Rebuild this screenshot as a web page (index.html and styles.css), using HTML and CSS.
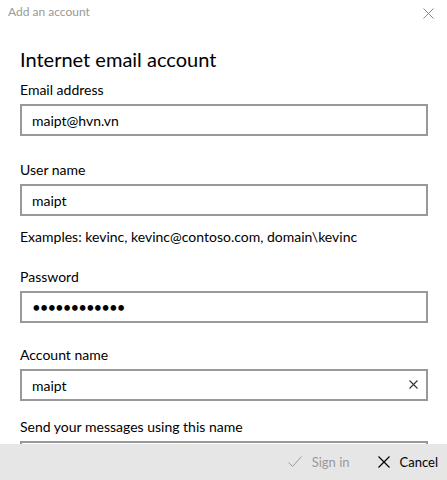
FILE: index.html
```html
<!DOCTYPE html>
<html lang="en">
<head>
    <meta charset="UTF-8">
    <meta name="viewport" content="width=device-width, initial-scale=1.0">
    <title>Add an account</title>
    <link rel="stylesheet" href="styles.css">
</head>
<body>
    <div class="dialog">
        <div class="titlebar">
            <span class="title">Add an account</span>
            <button class="close" aria-label="Close">
                <svg width="11" height="11" viewBox="0 0 11 11"><path d="M0.5 0.5L10.5 10.5M10.5 0.5L0.5 10.5" stroke="#888" stroke-width="1" fill="none"/></svg>
            </button>
        </div>

        <form class="form">
            <h1>Internet email account</h1>

            <div class="field field-email">
                <label for="email">Email address</label>
                <input id="email" class="textbox" type="text" value="maipt@hvn.vn">
            </div>

            <div class="field field-user">
                <label for="user">User name</label>
                <input id="user" class="textbox" type="text" value="maipt">
                <p class="hint">Examples: kevinc, kevinc@contoso.com, domain\kevinc</p>
            </div>

            <div class="field field-password">
                <label for="password">Password</label>
                <input id="password" class="textbox" type="password" value="............">
            </div>

            <div class="field field-account">
                <label for="account">Account name</label>
                <div class="textbox-wrap">
                    <input id="account" class="textbox" type="text" value="maipt">
                    <span class="clear">
                        <svg width="9" height="9" viewBox="0 0 9 9"><path d="M0.5 0.5L8.5 8.5M8.5 0.5L0.5 8.5" stroke="#333" stroke-width="1.1" fill="none"/></svg>
                    </span>
                </div>
            </div>

            <div class="field">
                <label for="sender">Send your messages using this name</label>
                <input id="sender" class="textbox" type="text" value="">
            </div>
        </form>

        <div class="actions">
            <button class="action disabled" disabled>
                <svg width="14" height="12" viewBox="0 0 14 12"><path d="M0.5 6.5L4.5 10.5L13.5 0.5" stroke="#999" stroke-width="1" fill="none"/></svg>
                Sign in
            </button>
            <button class="action">
                <svg width="12" height="12" viewBox="0 0 12 12"><path d="M0.5 0.5L11.5 11.5M11.5 0.5L0.5 11.5" stroke="#000" stroke-width="1.2" fill="none"/></svg>
                Cancel
            </button>
        </div>
    </div>
</body>
</html>
```

FILE: styles.css
```css
body {
    margin: 0;
    font-family: Lato, "Noto Sans", sans-serif;
    background: #fff;
    color: #000;
    overflow: hidden;
}

.dialog {
    height: 480px;
    position: relative;
}

.titlebar {
    display: flex;
    justify-content: space-between;
    height: 24px;
    padding: 4px 13px 0 8px;
    box-sizing: border-box;
}

.title {
    font-size: 12px;
    line-height: 16px;
    color: #999;
}

.close {
    border: none;
    background: none;
    padding: 0;
    margin-top: 3px;
    height: 11px;
}

.form {
    padding: 0 19px 0 20px;
}

h1 {
    font-size: 20px;
    font-weight: normal;
    line-height: 28px;
    margin: 21px 0 7px;
}

.field {
    display: flex;
    flex-direction: column;
}

.field label {
    font-size: 14px;
    line-height: 20px;
    margin-bottom: 4px;
}

.textbox {
    height: 32px;
    box-sizing: border-box;
    width: 100%;
    border: 2px solid #999;
    padding: 0 10px;
    font-family: inherit;
    font-size: 14px;
    color: #000;
    outline: none;
}

.textbox[type="password"] {
    font-size: 15px;
    letter-spacing: -1px;
}

.textbox-wrap {
    position: relative;
}

.clear {
    position: absolute;
    right: 10px;
    top: 11px;
    line-height: 0;
}

.hint {
    font-size: 14px;
    line-height: 20px;
    margin: 11px 0 0;
}

.field-email { margin-bottom: 24px; }
.field-user { margin-bottom: 20px; }
.field-password { margin-bottom: 22px; }
.field-account { margin-bottom: 16px; }

.actions {
    position: absolute;
    left: 0;
    right: 0;
    bottom: 0;
    height: 36px;
    background: #e6e6e6;
    display: flex;
    justify-content: flex-end;
    align-items: center;
    gap: 28px;
    padding-right: 9px;
}

.action {
    border: none;
    background: none;
    padding: 0;
    display: flex;
    align-items: center;
    gap: 10px;
    font-family: inherit;
    font-size: 13px;
    color: #000;
}

.action.disabled {
    color: #999;
}
```
